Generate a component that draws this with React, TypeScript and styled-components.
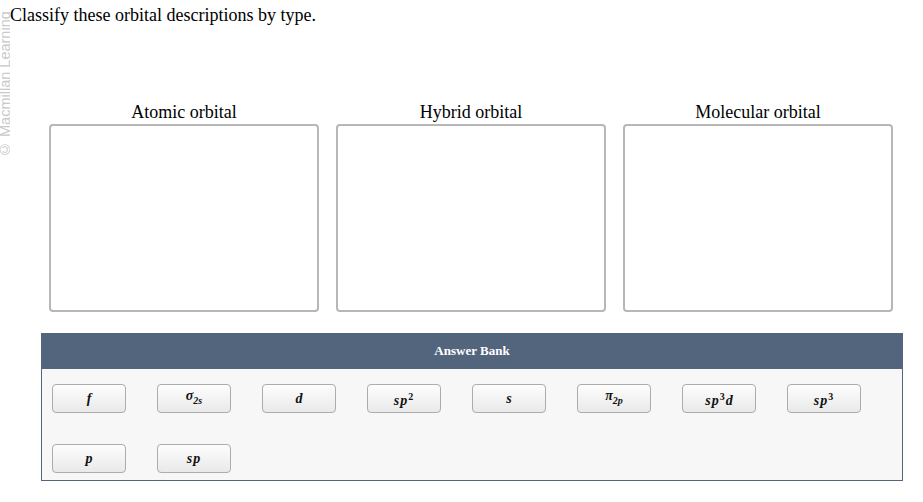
import React from 'react';
import styled, { createGlobalStyle } from 'styled-components';

const GlobalStyle = createGlobalStyle`
  body {
    margin: 0;
    background: #fff;
    font-family: 'Liberation Serif', 'Times New Roman', serif;
  }
`;

const Page = styled.div`
  position: relative;
  width: 923px;
  height: 502px;
  overflow: hidden;
`;

// copyright notice running up the left edge, over the page
const Watermark = styled.div`
  position: absolute;
  left: 0;
  top: 0;
  height: 157px;
  writing-mode: vertical-rl;
  transform: rotate(180deg);
  font-family: 'Liberation Sans', Arial, sans-serif;
  font-size: 14.5px;
  line-height: 10px;
  color: #c9c9c9;
  white-space: nowrap;
  overflow: hidden;
`;

const Prompt = styled.div`
  padding: 5px 0 0 10px;
  font-size: 18px;
  line-height: 21px;
  color: #000;
`;

const Targets = styled.div`
  display: grid;
  grid-template-columns: repeat(3, 270px);
  column-gap: 17px;
  margin: 76px 0 0 49px;
`;

const Column = styled.div`
  display: flex;
  flex-direction: column;
  align-items: center;
`;

const Label = styled.div`
  font-size: 18px;
  line-height: 20px;
  height: 22px;
  color: #000;
`;

const DropBox = styled.div`
  box-sizing: border-box;
  width: 270px;
  height: 188px;
  border: 2px solid #b7b7b7;
  border-radius: 4px;
  background: #fff;
`;

const Bank = styled.div`
  margin: 21px 0 0 41px;
  width: 862px;
`;

const BankHeader = styled.div`
  height: 36px;
  background: #52657d;
  color: #fff;
  font-size: 13px;
  font-weight: bold;
  display: flex;
  align-items: center;
  justify-content: center;
`;

const BankBody = styled.div`
  box-sizing: border-box;
  border: 1px solid #52657d;
  border-top: none;
  background: #f7f7f7;
  padding: 15px 10px 7px 10px;
  display: grid;
  grid-template-columns: repeat(8, 74px);
  column-gap: 31px;
  row-gap: 31px;
`;

const Chip = styled.div`
  box-sizing: border-box;
  width: 74px;
  height: 29px;
  border: 1px solid #acacac;
  border-radius: 4px;
  background: linear-gradient(#fdfdfd, #e9e9e9);
  display: flex;
  align-items: center;
  justify-content: center;
  color: #111;
`;

const Term = styled.span`
  font-size: 14px;
  line-height: 14px;
  font-weight: bold;
  font-style: italic;
  white-space: nowrap;
`;

const Letters = styled.span`
  letter-spacing: 1px;
`;

const Sub = styled.span`
  font-size: 10px;
  vertical-align: -4px;
`;

const Sup = styled.span`
  font-size: 10px;
  font-style: normal;
  vertical-align: 5px;
  margin-right: 1px;
`;

const chips: React.ReactNode[] = [
  'f',
  <>σ<Sub>2s</Sub></>,
  'd',
  <><Letters>sp</Letters><Sup>2</Sup></>,
  's',
  <>π<Sub>2p</Sub></>,
  <><Letters>sp</Letters><Sup>3</Sup>d</>,
  <><Letters>sp</Letters><Sup>3</Sup></>,
  'p',
  <Letters>sp</Letters>,
];

const App: React.FC = () => {
  return (
    <Page>
      <GlobalStyle />
      <Watermark>© Macmillan Learning</Watermark>
      <Prompt>Classify these orbital descriptions by type.</Prompt>
      <Targets>
        {['Atomic orbital', 'Hybrid orbital', 'Molecular orbital'].map((t) => (
          <Column key={t}>
            <Label>{t}</Label>
            <DropBox />
          </Column>
        ))}
      </Targets>
      <Bank>
        <BankHeader>Answer Bank</BankHeader>
        <BankBody>
          {chips.map((c, i) => (
            <Chip key={i}>
              <Term>{c}</Term>
            </Chip>
          ))}
        </BankBody>
      </Bank>
    </Page>
  );
};

export default App;
